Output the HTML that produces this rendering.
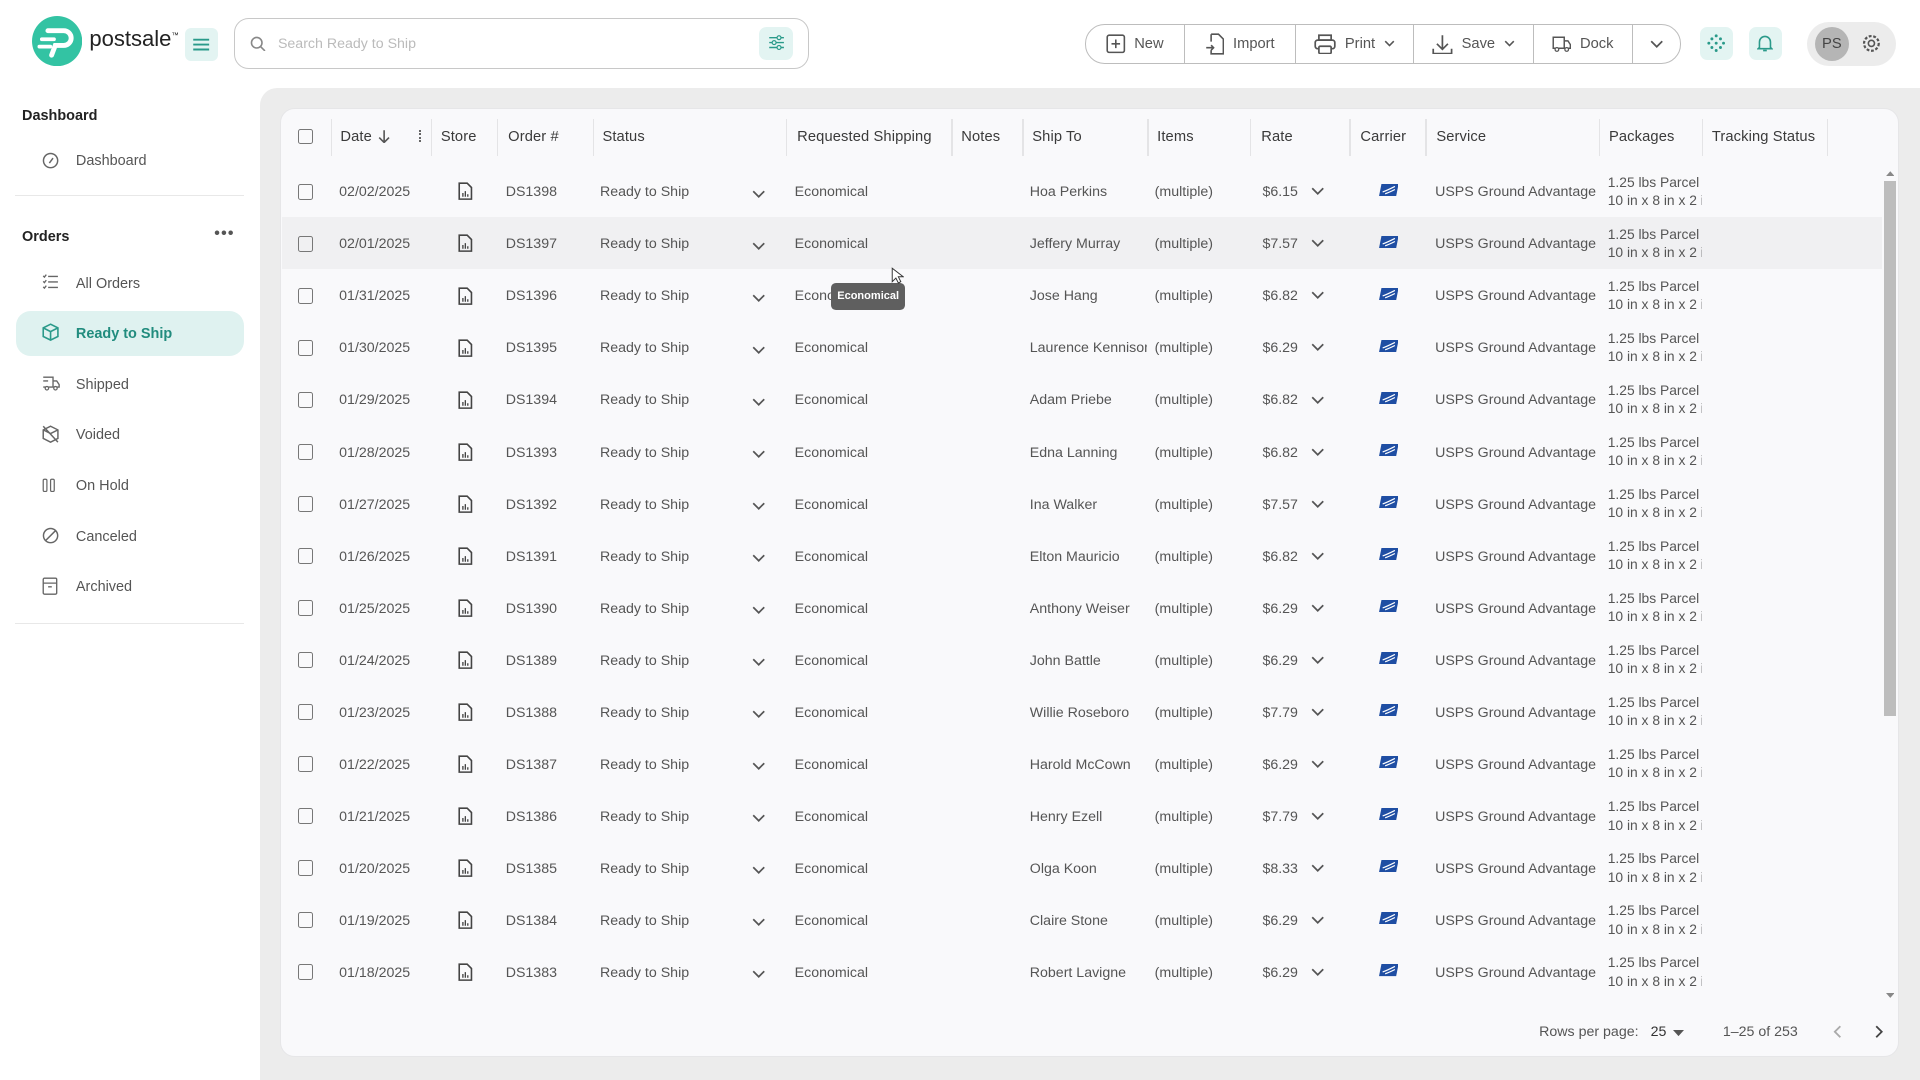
<!DOCTYPE html>
<html><head><meta charset="utf-8">
<style>
html{zoom:1.22449}
*{box-sizing:border-box;margin:0;padding:0}
body{width:1568px;height:882px;overflow:hidden;background:#fff;font-family:"Liberation Sans",Arial,sans-serif;font-size:12px;color:#555;position:relative}
.a{position:absolute}
.side .it{position:absolute;left:62px;font-size:11.8px;color:#555;margin-top:1px}
.side svg{position:absolute;left:34px}
.btns{left:886px;top:20px;width:487px;height:32px;border:1px solid #bdbdbd;border-radius:16px;display:flex;overflow:hidden}
.btns div{border-right:1px solid #bdbdbd;display:flex;align-items:center;justify-content:center;gap:7px;color:#555;font-size:12px}
.btns div:last-child{border-right:none}
.main{left:212px;top:72px;width:1356px;height:810px;background:#ececec;border-top-left-radius:14px}
.card{left:229px;top:88px;width:1322px;height:775px;background:#f9f9fb;border-radius:12px;border:1px solid #e6e6e8;overflow:hidden}
.hd{position:absolute;top:105px;font-size:12px;color:#3a3a3a;letter-spacing:0.1px}
.sep{position:absolute;top:97px;width:1px;height:30px;background:#e4e4e6}
.row{position:absolute;left:230px;width:1307px;height:42.5px;line-height:45px;font-size:11.6px}
.row span,.row i{position:absolute;font-style:normal;white-space:nowrap}
.cb{width:13px;height:13px;border:1.6px solid #777;border-radius:2px;top:15px}
.pk{line-height:15px;top:6px;left:1083px;width:77px;overflow:hidden;font-size:11.3px}
</style></head><body>

<svg class="a" style="left:26px;top:13px" width="41" height="41" viewBox="0 0 41 41"><circle cx="20.5" cy="20.5" r="20.5" fill="#33c3a3"/><path d="M13 12h13a6 6 0 0 1 0 12h-7l-3 8" stroke="#fff" stroke-width="4" fill="none" stroke-linecap="round"/><path d="M8 19h10M6 25h9" stroke="#fff" stroke-width="3" stroke-linecap="round"/></svg>
<div class="a" style="left:73px;top:21px;font-size:18px;color:#222">postsale<sup style="font-size:6px">™</sup></div>
<div class="a" style="left:151px;top:23px;width:27px;height:27px;background:#e3f4f2;border-radius:5px"></div>
<svg class="a" style="left:157px;top:29px" width="15" height="14"><path d="M1 3h13M1 7h13M1 11h13" stroke="#2a9a8a" stroke-width="1.6"/></svg>
<div class="a" style="left:191px;top:15px;width:470px;height:41px;border:1px solid #c8c8c8;border-radius:12px"></div>
<svg class="a" style="left:204px;top:29px" width="13" height="13"><circle cx="5.5" cy="5.5" r="4.3" stroke="#888" stroke-width="1.3" fill="none"/><path d="M8.7 8.7l3.5 3.5" stroke="#888" stroke-width="1.3"/></svg>
<div class="a" style="left:227px;top:29px;color:#bbb;font-size:11.6px">Search Ready to Ship</div>
<div class="a" style="left:620px;top:22px;width:28px;height:27px;background:#e3f4f2;border-radius:6px"></div>
<svg class="a" style="left:627px;top:28px" width="14" height="14"><path d="M1 3h12M1 7h12M1 11h12" stroke="#2a9a8a" stroke-width="1.2"/><circle cx="9" cy="3" r="1.6" fill="#e3f4f2" stroke="#2a9a8a"/><circle cx="5" cy="7" r="1.6" fill="#e3f4f2" stroke="#2a9a8a"/><circle cx="9" cy="11" r="1.6" fill="#e3f4f2" stroke="#2a9a8a"/></svg>

<div class="a btns">
<div style="width:81px"><svg width="16" height="16"><rect x="1" y="1" width="14" height="14" rx="1.5" stroke="#555" stroke-width="1.3" fill="none"/><path d="M8 4.5v7M4.5 8h7" stroke="#555" stroke-width="1.3"/></svg>New</div>
<div style="width:91px"><svg width="16" height="18"><path d="M5 1h6l4 4v12H5v-3M5 7V1" stroke="#555" stroke-width="1.3" fill="none"/><path d="M1 12h6M5 10l2 2-2 2" stroke="#555" stroke-width="1.3" fill="none"/></svg>Import</div>
<div style="width:97px"><svg width="18" height="17"><rect x="4" y="1" width="10" height="4" stroke="#555" stroke-width="1.4" fill="none"/><rect x="1" y="5" width="16" height="7" rx="2" stroke="#555" stroke-width="1.4" fill="none"/><rect x="4" y="10" width="10" height="6" rx="1" stroke="#555" stroke-width="1.4" fill="#fff"/></svg>Print<svg width="9" height="6"><path d="M1 1l3.5 3.5L8 1" stroke="#555" stroke-width="1.3" fill="none"/></svg></div>
<div style="width:98px"><svg width="17" height="17"><path d="M8.5 1v11M4 8l4.5 4.5L13 8M1 12v4h15v-4" stroke="#555" stroke-width="1.4" fill="none"/></svg>Save<svg width="9" height="6"><path d="M1 1l3.5 3.5L8 1" stroke="#555" stroke-width="1.3" fill="none"/></svg></div>
<div style="width:81px"><svg width="16" height="13"><path d="M1 1h9v9H1zM10 4h3l2 3v3h-5" stroke="#555" stroke-width="1.2" fill="none"/><circle cx="4" cy="11" r="1.5" fill="#fff" stroke="#555"/><circle cx="12" cy="11" r="1.5" fill="#fff" stroke="#555"/></svg>Dock</div>
<div style="width:39px"><svg width="11" height="7"><path d="M1 1l4.5 4.5L10 1" stroke="#555" stroke-width="1.4" fill="none"/></svg></div>
</div>
<div class="a" style="left:1388px;top:22px;width:27px;height:27px;background:#e3f4f2;border-radius:6px"></div>
<svg class="a" style="left:1394px;top:28px" width="15" height="15" fill="#2a9a8a"><circle cx="7.5" cy="1.5" r="1.2"/><circle cx="7.5" cy="13.5" r="1.2"/><circle cx="1.5" cy="7.5" r="1.2"/><circle cx="13.5" cy="7.5" r="1.2"/><circle cx="4" cy="4" r="1.2"/><circle cx="11" cy="4" r="1.2"/><circle cx="4" cy="11" r="1.2"/><circle cx="11" cy="11" r="1.2"/><circle cx="7.5" cy="7.5" r="1.2"/></svg>
<div class="a" style="left:1428px;top:22px;width:27px;height:27px;background:#e3f4f2;border-radius:6px"></div>
<svg class="a" style="left:1435px;top:28px" width="13" height="15"><path d="M2 11V6.5a4.5 4.5 0 0 1 9 0V11l1 1H1zM5 13.5h3" stroke="#2a9a8a" stroke-width="1.3" fill="none"/></svg>
<div class="a" style="left:1476px;top:18px;width:72px;height:36px;background:#ececec;border-radius:18px"></div>
<div class="a" style="left:1482px;top:22px;width:28px;height:28px;background:#b5b5b5;border-radius:50%;color:#444;font-size:12px;text-align:center;line-height:28px">PS</div>
<svg class="a" style="left:1520px;top:27px" width="17" height="17"><circle cx="8.5" cy="8.5" r="2.5" stroke="#555" stroke-width="1.3" fill="none"/><circle cx="8.5" cy="8.5" r="6" stroke="#555" stroke-width="1.8" stroke-dasharray="2.3 1.4" fill="none"/></svg>

<div class="side">
<div class="a" style="left:18px;top:88px;font-weight:bold;color:#222;font-size:11.8px">Dashboard</div>
<svg style="top:124px" width="14" height="14"><circle cx="7" cy="7" r="5.8" stroke="#666" stroke-width="1.2" fill="none"/><path d="M6 9l3-4" stroke="#666" stroke-width="1.2"/></svg>
<div class="it" style="top:124px">Dashboard</div>
<div class="a" style="left:12px;top:159px;width:187px;height:1px;background:#e8e8e8"></div>
<div class="a" style="left:18px;top:187px;font-weight:bold;color:#222;font-size:11.8px">Orders</div>
<div class="a" style="left:175px;top:184px;color:#555;font-size:13px;font-weight:bold;letter-spacing:1px">•••</div>
<svg style="top:224px" width="14" height="13"><path d="M5 2h8M5 6.5h8M5 11h8M1 1.5l1 1 1.5-2M1 6l1 1 1.5-2M1 10.5l1 1 1.5-2" stroke="#666" stroke-width="1.1" fill="none"/></svg>
<div class="it" style="top:224px">All Orders</div>
<div class="a" style="left:13px;top:254px;width:186px;height:37px;background:#dff2f0;border-radius:12px"></div>
<svg style="top:264px" width="14" height="15"><path d="M7 1l6 3v7l-6 3-6-3V4zM1 4l6 3 6-3M7 7v7" stroke="#2a9a8a" stroke-width="1.3" fill="none"/></svg>
<div class="it" style="top:265px;color:#218c7e;font-weight:bold">Ready to Ship</div>
<svg style="top:307px" width="15" height="12"><path d="M1 1h8v8H1M9 4h3l2 3v2h-5M1 4h4" stroke="#666" stroke-width="1.1" fill="none"/><circle cx="4" cy="10" r="1.4" fill="#fff" stroke="#666"/><circle cx="11" cy="10" r="1.4" fill="#fff" stroke="#666"/></svg>
<div class="it" style="top:307px">Shipped</div>
<svg style="top:347px" width="14" height="15"><path d="M7 1l6 3v7l-6 3-6-3V4zM1 4l6 3 6-3M1 1l12 13" stroke="#666" stroke-width="1.2" fill="none"/></svg>
<div class="it" style="top:348px">Voided</div>
<svg style="top:390px" width="12" height="12"><rect x="1" y="1" width="3" height="10" rx="1" stroke="#666" fill="none"/><rect x="7" y="1" width="3" height="10" rx="1" stroke="#666" fill="none"/></svg>
<div class="it" style="top:389px">On Hold</div>
<svg style="top:430px" width="14" height="14"><circle cx="7" cy="7" r="5.8" stroke="#666" stroke-width="1.2" fill="none"/><path d="M3 11l8-8" stroke="#666" stroke-width="1.2"/></svg>
<div class="it" style="top:431px">Canceled</div>
<svg style="top:471px" width="13" height="15"><rect x="1" y="1" width="11" height="13" rx="1" stroke="#666" stroke-width="1.1" fill="none"/><path d="M1 5h11M5 8h3" stroke="#666" stroke-width="1.1"/></svg>
<div class="it" style="top:472px">Archived</div>
<div class="a" style="left:12px;top:509px;width:187px;height:1px;background:#e8e8e8"></div>
</div>

<div class="a main"></div>
<div class="a card"></div>
<div class="a cb" style="left:243px;top:105px"></div>
<div class="hd" style="left:278px">Date</div>
<svg class="a" style="left:309px;top:105px" width="10" height="12"><path d="M5 1v10M1 7l4 4 4-4" stroke="#555" stroke-width="1.3" fill="none"/></svg>
<div class="a" style="left:342px;top:106px;width:2px;height:10px;border-left:2px dotted #666"></div>
<div class="hd" style="left:360px">Store</div>
<div class="hd" style="left:415px">Order #</div>
<div class="hd" style="left:492px">Status</div>
<div class="hd" style="left:651px">Requested Shipping</div>
<div class="hd" style="left:785px">Notes</div>
<div class="hd" style="left:843px">Ship To</div>
<div class="hd" style="left:945px">Items</div>
<div class="hd" style="left:1030px">Rate</div>
<div class="hd" style="left:1111px">Carrier</div>
<div class="hd" style="left:1173px">Service</div>
<div class="hd" style="left:1314px">Packages</div>
<div class="hd" style="left:1398px">Tracking Status</div>
<div class="sep" style="left:270px"></div><div class="sep" style="left:352px"></div><div class="sep" style="left:406px"></div><div class="sep" style="left:484px"></div><div class="sep" style="left:642px"></div><div class="sep" style="left:777px"></div><div class="sep" style="left:835px"></div><div class="sep" style="left:937px"></div><div class="sep" style="left:1021px"></div><div class="sep" style="left:1102px"></div><div class="sep" style="left:1164px"></div><div class="sep" style="left:1306px"></div><div class="sep" style="left:1390px"></div><div class="sep" style="left:1492px"></div>

<svg width="0" height="0" style="position:absolute"><defs>
<symbol id="doc" viewBox="0 0 12 15"><path d="M1 1h6.5L11 4.5V14H1z" stroke="#444" stroke-width="1.3" fill="none"/><path d="M4 12V9M6 12V7.5M8 12V10" stroke="#444" stroke-width="1.1"/></symbol>
<symbol id="usps" viewBox="0 0 16 10"><path d="M2 0h14l-2 10H0z" fill="#1f4ea3"/><path d="M3 6.5c3-1 6-2.5 10-4.5M5 8c3-1 5-2 8-3.5" stroke="#fff" stroke-width="1" fill="none"/></symbol>
<symbol id="chev" viewBox="0 0 11 7"><path d="M1 1l4.5 4.5L10 1" stroke="#555" stroke-width="1.4" fill="none"/></symbol>
</defs></svg>

<div class="row" style="top:135px"><i class="cb" style="left:13px"></i><span style="left:47px">02/02/2025</span><svg class="a" style="left:144px;top:14px" width="12" height="15"><use href="#doc"/></svg><span style="left:183px">DS1398</span><span style="left:260px">Ready to Ship</span><svg class="a" style="left:384px;top:20px" width="11" height="7"><use href="#chev"/></svg><span style="left:419px">Economical</span><span style="left:611px">Hoa Perkins</span><span style="left:713px">(multiple)</span><span style="left:801px">$6.15</span><svg class="a" style="left:841px;top:18px" width="11" height="7"><use href="#chev"/></svg><svg class="a" style="left:896px;top:15px" width="16" height="10"><use href="#usps"/></svg><span style="left:942px">USPS Ground Advantage</span><span class="pk">1.25 lbs Parcel<br>10 in x 8 in x 2 in</span></div>
<div class="row" style="top:177.5px;background:#f0f0f2"><i class="cb" style="left:13px"></i><span style="left:47px">02/01/2025</span><svg class="a" style="left:144px;top:14px" width="12" height="15"><use href="#doc"/></svg><span style="left:183px">DS1397</span><span style="left:260px">Ready to Ship</span><svg class="a" style="left:384px;top:20px" width="11" height="7"><use href="#chev"/></svg><span style="left:419px">Economical</span><span style="left:611px">Jeffery Murray</span><span style="left:713px">(multiple)</span><span style="left:801px">$7.57</span><svg class="a" style="left:841px;top:18px" width="11" height="7"><use href="#chev"/></svg><svg class="a" style="left:896px;top:15px" width="16" height="10"><use href="#usps"/></svg><span style="left:942px">USPS Ground Advantage</span><span class="pk">1.25 lbs Parcel<br>10 in x 8 in x 2 in</span></div>
<div class="row" style="top:220px"><i class="cb" style="left:13px"></i><span style="left:47px">01/31/2025</span><svg class="a" style="left:144px;top:14px" width="12" height="15"><use href="#doc"/></svg><span style="left:183px">DS1396</span><span style="left:260px">Ready to Ship</span><svg class="a" style="left:384px;top:20px" width="11" height="7"><use href="#chev"/></svg><span style="left:419px">Economical</span><span style="left:611px">Jose Hang</span><span style="left:713px">(multiple)</span><span style="left:801px">$6.82</span><svg class="a" style="left:841px;top:18px" width="11" height="7"><use href="#chev"/></svg><svg class="a" style="left:896px;top:15px" width="16" height="10"><use href="#usps"/></svg><span style="left:942px">USPS Ground Advantage</span><span class="pk">1.25 lbs Parcel<br>10 in x 8 in x 2 in</span></div>
<div class="row" style="top:262.5px"><i class="cb" style="left:13px"></i><span style="left:47px">01/30/2025</span><svg class="a" style="left:144px;top:14px" width="12" height="15"><use href="#doc"/></svg><span style="left:183px">DS1395</span><span style="left:260px">Ready to Ship</span><svg class="a" style="left:384px;top:20px" width="11" height="7"><use href="#chev"/></svg><span style="left:419px">Economical</span><span style="left:611px;width:96px;overflow:hidden">Laurence Kennison</span><span style="left:713px">(multiple)</span><span style="left:801px">$6.29</span><svg class="a" style="left:841px;top:18px" width="11" height="7"><use href="#chev"/></svg><svg class="a" style="left:896px;top:15px" width="16" height="10"><use href="#usps"/></svg><span style="left:942px">USPS Ground Advantage</span><span class="pk">1.25 lbs Parcel<br>10 in x 8 in x 2 in</span></div>
<div class="row" style="top:305px"><i class="cb" style="left:13px"></i><span style="left:47px">01/29/2025</span><svg class="a" style="left:144px;top:14px" width="12" height="15"><use href="#doc"/></svg><span style="left:183px">DS1394</span><span style="left:260px">Ready to Ship</span><svg class="a" style="left:384px;top:20px" width="11" height="7"><use href="#chev"/></svg><span style="left:419px">Economical</span><span style="left:611px">Adam Priebe</span><span style="left:713px">(multiple)</span><span style="left:801px">$6.82</span><svg class="a" style="left:841px;top:18px" width="11" height="7"><use href="#chev"/></svg><svg class="a" style="left:896px;top:15px" width="16" height="10"><use href="#usps"/></svg><span style="left:942px">USPS Ground Advantage</span><span class="pk">1.25 lbs Parcel<br>10 in x 8 in x 2 in</span></div>
<div class="row" style="top:347.5px"><i class="cb" style="left:13px"></i><span style="left:47px">01/28/2025</span><svg class="a" style="left:144px;top:14px" width="12" height="15"><use href="#doc"/></svg><span style="left:183px">DS1393</span><span style="left:260px">Ready to Ship</span><svg class="a" style="left:384px;top:20px" width="11" height="7"><use href="#chev"/></svg><span style="left:419px">Economical</span><span style="left:611px">Edna Lanning</span><span style="left:713px">(multiple)</span><span style="left:801px">$6.82</span><svg class="a" style="left:841px;top:18px" width="11" height="7"><use href="#chev"/></svg><svg class="a" style="left:896px;top:15px" width="16" height="10"><use href="#usps"/></svg><span style="left:942px">USPS Ground Advantage</span><span class="pk">1.25 lbs Parcel<br>10 in x 8 in x 2 in</span></div>
<div class="row" style="top:390px"><i class="cb" style="left:13px"></i><span style="left:47px">01/27/2025</span><svg class="a" style="left:144px;top:14px" width="12" height="15"><use href="#doc"/></svg><span style="left:183px">DS1392</span><span style="left:260px">Ready to Ship</span><svg class="a" style="left:384px;top:20px" width="11" height="7"><use href="#chev"/></svg><span style="left:419px">Economical</span><span style="left:611px">Ina Walker</span><span style="left:713px">(multiple)</span><span style="left:801px">$7.57</span><svg class="a" style="left:841px;top:18px" width="11" height="7"><use href="#chev"/></svg><svg class="a" style="left:896px;top:15px" width="16" height="10"><use href="#usps"/></svg><span style="left:942px">USPS Ground Advantage</span><span class="pk">1.25 lbs Parcel<br>10 in x 8 in x 2 in</span></div>
<div class="row" style="top:432.5px"><i class="cb" style="left:13px"></i><span style="left:47px">01/26/2025</span><svg class="a" style="left:144px;top:14px" width="12" height="15"><use href="#doc"/></svg><span style="left:183px">DS1391</span><span style="left:260px">Ready to Ship</span><svg class="a" style="left:384px;top:20px" width="11" height="7"><use href="#chev"/></svg><span style="left:419px">Economical</span><span style="left:611px">Elton Mauricio</span><span style="left:713px">(multiple)</span><span style="left:801px">$6.82</span><svg class="a" style="left:841px;top:18px" width="11" height="7"><use href="#chev"/></svg><svg class="a" style="left:896px;top:15px" width="16" height="10"><use href="#usps"/></svg><span style="left:942px">USPS Ground Advantage</span><span class="pk">1.25 lbs Parcel<br>10 in x 8 in x 2 in</span></div>
<div class="row" style="top:475px"><i class="cb" style="left:13px"></i><span style="left:47px">01/25/2025</span><svg class="a" style="left:144px;top:14px" width="12" height="15"><use href="#doc"/></svg><span style="left:183px">DS1390</span><span style="left:260px">Ready to Ship</span><svg class="a" style="left:384px;top:20px" width="11" height="7"><use href="#chev"/></svg><span style="left:419px">Economical</span><span style="left:611px">Anthony Weiser</span><span style="left:713px">(multiple)</span><span style="left:801px">$6.29</span><svg class="a" style="left:841px;top:18px" width="11" height="7"><use href="#chev"/></svg><svg class="a" style="left:896px;top:15px" width="16" height="10"><use href="#usps"/></svg><span style="left:942px">USPS Ground Advantage</span><span class="pk">1.25 lbs Parcel<br>10 in x 8 in x 2 in</span></div>
<div class="row" style="top:517.5px"><i class="cb" style="left:13px"></i><span style="left:47px">01/24/2025</span><svg class="a" style="left:144px;top:14px" width="12" height="15"><use href="#doc"/></svg><span style="left:183px">DS1389</span><span style="left:260px">Ready to Ship</span><svg class="a" style="left:384px;top:20px" width="11" height="7"><use href="#chev"/></svg><span style="left:419px">Economical</span><span style="left:611px">John Battle</span><span style="left:713px">(multiple)</span><span style="left:801px">$6.29</span><svg class="a" style="left:841px;top:18px" width="11" height="7"><use href="#chev"/></svg><svg class="a" style="left:896px;top:15px" width="16" height="10"><use href="#usps"/></svg><span style="left:942px">USPS Ground Advantage</span><span class="pk">1.25 lbs Parcel<br>10 in x 8 in x 2 in</span></div>
<div class="row" style="top:560px"><i class="cb" style="left:13px"></i><span style="left:47px">01/23/2025</span><svg class="a" style="left:144px;top:14px" width="12" height="15"><use href="#doc"/></svg><span style="left:183px">DS1388</span><span style="left:260px">Ready to Ship</span><svg class="a" style="left:384px;top:20px" width="11" height="7"><use href="#chev"/></svg><span style="left:419px">Economical</span><span style="left:611px">Willie Roseboro</span><span style="left:713px">(multiple)</span><span style="left:801px">$7.79</span><svg class="a" style="left:841px;top:18px" width="11" height="7"><use href="#chev"/></svg><svg class="a" style="left:896px;top:15px" width="16" height="10"><use href="#usps"/></svg><span style="left:942px">USPS Ground Advantage</span><span class="pk">1.25 lbs Parcel<br>10 in x 8 in x 2 in</span></div>
<div class="row" style="top:602.5px"><i class="cb" style="left:13px"></i><span style="left:47px">01/22/2025</span><svg class="a" style="left:144px;top:14px" width="12" height="15"><use href="#doc"/></svg><span style="left:183px">DS1387</span><span style="left:260px">Ready to Ship</span><svg class="a" style="left:384px;top:20px" width="11" height="7"><use href="#chev"/></svg><span style="left:419px">Economical</span><span style="left:611px">Harold McCown</span><span style="left:713px">(multiple)</span><span style="left:801px">$6.29</span><svg class="a" style="left:841px;top:18px" width="11" height="7"><use href="#chev"/></svg><svg class="a" style="left:896px;top:15px" width="16" height="10"><use href="#usps"/></svg><span style="left:942px">USPS Ground Advantage</span><span class="pk">1.25 lbs Parcel<br>10 in x 8 in x 2 in</span></div>
<div class="row" style="top:645px"><i class="cb" style="left:13px"></i><span style="left:47px">01/21/2025</span><svg class="a" style="left:144px;top:14px" width="12" height="15"><use href="#doc"/></svg><span style="left:183px">DS1386</span><span style="left:260px">Ready to Ship</span><svg class="a" style="left:384px;top:20px" width="11" height="7"><use href="#chev"/></svg><span style="left:419px">Economical</span><span style="left:611px">Henry Ezell</span><span style="left:713px">(multiple)</span><span style="left:801px">$7.79</span><svg class="a" style="left:841px;top:18px" width="11" height="7"><use href="#chev"/></svg><svg class="a" style="left:896px;top:15px" width="16" height="10"><use href="#usps"/></svg><span style="left:942px">USPS Ground Advantage</span><span class="pk">1.25 lbs Parcel<br>10 in x 8 in x 2 in</span></div>
<div class="row" style="top:687.5px"><i class="cb" style="left:13px"></i><span style="left:47px">01/20/2025</span><svg class="a" style="left:144px;top:14px" width="12" height="15"><use href="#doc"/></svg><span style="left:183px">DS1385</span><span style="left:260px">Ready to Ship</span><svg class="a" style="left:384px;top:20px" width="11" height="7"><use href="#chev"/></svg><span style="left:419px">Economical</span><span style="left:611px">Olga Koon</span><span style="left:713px">(multiple)</span><span style="left:801px">$8.33</span><svg class="a" style="left:841px;top:18px" width="11" height="7"><use href="#chev"/></svg><svg class="a" style="left:896px;top:15px" width="16" height="10"><use href="#usps"/></svg><span style="left:942px">USPS Ground Advantage</span><span class="pk">1.25 lbs Parcel<br>10 in x 8 in x 2 in</span></div>
<div class="row" style="top:730px"><i class="cb" style="left:13px"></i><span style="left:47px">01/19/2025</span><svg class="a" style="left:144px;top:14px" width="12" height="15"><use href="#doc"/></svg><span style="left:183px">DS1384</span><span style="left:260px">Ready to Ship</span><svg class="a" style="left:384px;top:20px" width="11" height="7"><use href="#chev"/></svg><span style="left:419px">Economical</span><span style="left:611px">Claire Stone</span><span style="left:713px">(multiple)</span><span style="left:801px">$6.29</span><svg class="a" style="left:841px;top:18px" width="11" height="7"><use href="#chev"/></svg><svg class="a" style="left:896px;top:15px" width="16" height="10"><use href="#usps"/></svg><span style="left:942px">USPS Ground Advantage</span><span class="pk">1.25 lbs Parcel<br>10 in x 8 in x 2 in</span></div>
<div class="row" style="top:772.5px"><i class="cb" style="left:13px"></i><span style="left:47px">01/18/2025</span><svg class="a" style="left:144px;top:14px" width="12" height="15"><use href="#doc"/></svg><span style="left:183px">DS1383</span><span style="left:260px">Ready to Ship</span><svg class="a" style="left:384px;top:20px" width="11" height="7"><use href="#chev"/></svg><span style="left:419px">Economical</span><span style="left:611px">Robert Lavigne</span><span style="left:713px">(multiple)</span><span style="left:801px">$6.29</span><svg class="a" style="left:841px;top:18px" width="11" height="7"><use href="#chev"/></svg><svg class="a" style="left:896px;top:15px" width="16" height="10"><use href="#usps"/></svg><span style="left:942px">USPS Ground Advantage</span><span class="pk">1.25 lbs Parcel<br>10 in x 8 in x 2 in</span></div>

<div class="a" style="left:679px;top:231px;width:60px;height:22px;background:#5f5f5f;border-radius:4px;color:#fff;font-size:9px;font-weight:bold;text-align:center;line-height:22px">Economical</div>
<svg class="a" style="left:728px;top:218px" width="10" height="15"><path d="M1 1v11l3-3 2 4 2-1-2-4h4z" fill="#fff" stroke="#333" stroke-width="0.8"/></svg>

<div class="a" style="left:1539px;top:148px;width:9px;height:437px;background:#bdbdbd"></div>
<svg class="a" style="left:1540px;top:139px" width="7" height="5"><path d="M0 5l3.5-4L7 5z" fill="#888"/></svg>
<svg class="a" style="left:1540px;top:811px" width="7" height="5"><path d="M0 0l3.5 4L7 0z" fill="#888"/></svg>

<div class="a" style="left:1257px;top:836px;font-size:11.6px;color:#555">Rows per page:</div>
<div class="a" style="left:1348px;top:836px;font-size:11.6px;color:#333">25</div>
<svg class="a" style="left:1366px;top:841px" width="9" height="5"><path d="M0 0h9L4.5 5z" fill="#555"/></svg>
<div class="a" style="left:1407px;top:836px;font-size:11.6px;color:#555">1–25 of 253</div>
<svg class="a" style="left:1497px;top:837px" width="7" height="11"><path d="M6 1L1.5 5.5 6 10" stroke="#aaa" stroke-width="1.5" fill="none"/></svg>
<svg class="a" style="left:1531px;top:837px" width="7" height="11"><path d="M1 1l4.5 4.5L1 10" stroke="#444" stroke-width="1.5" fill="none"/></svg>
</body></html>
